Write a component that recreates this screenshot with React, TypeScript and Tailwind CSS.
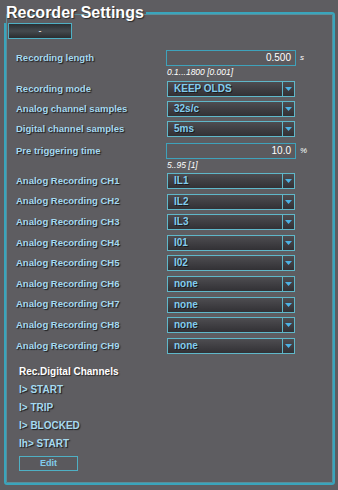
import React from 'react'

const font = { fontFamily: '"Liberation Sans", Arial, sans-serif' }

const selects: [string, string][] = [
  ['Analog Recording CH1', 'IL1'],
  ['Analog Recording CH2', 'IL2'],
  ['Analog Recording CH3', 'IL3'],
  ['Analog Recording CH4', 'I01'],
  ['Analog Recording CH5', 'I02'],
  ['Analog Recording CH6', 'none'],
  ['Analog Recording CH7', 'none'],
  ['Analog Recording CH8', 'none'],
  ['Analog Recording CH9', 'none'],
]

const digital = ['I> START', 'I> TRIP', 'I> BLOCKED', 'Ih> START']

function Label({ children }: { children: React.ReactNode }) {
  return (
    <span className="w-[161px] shrink-0 pl-[10px] text-[9.5px] font-bold text-[#a6daf0] [text-shadow:1px_1px_1px_#1c1c1e] whitespace-nowrap">
      {children}
    </span>
  )
}

function Select({ value }: { value: string }) {
  return (
    <div className="flex h-[16px] w-[128px] border border-[#5fb7c9] bg-gradient-to-b from-[#4e4d51] to-[#323135]">
      <span className="flex-1 pl-[6px] text-[10px] font-bold leading-[14px] text-[#82cdee] [text-shadow:1px_1px_0_#1c1c1e]">
        {value}
      </span>
      <div className="flex w-[12px] items-center justify-center border-l border-[#5fb7c9]">
        <svg width="7" height="4" viewBox="0 0 7 4">
          <path d="M0 0h7L3.5 4z" fill="#4cb2e4" />
        </svg>
      </div>
    </div>
  )
}

function Input({ label, value, unit }: { label: string; value: string; unit: string }) {
  return (
    <div className="flex h-[16px] items-center">
      <Label>{label}</Label>
      <div className="-ml-[1px] h-[16px] w-[130px] border border-[#3ea2bb] bg-[#5b5a5e] pr-[4px] text-right text-[10px] leading-[14px] text-white">
        {value}
      </div>
      <span className="ml-[4px] text-[8px] italic text-white">{unit}</span>
    </div>
  )
}

function Hint({ children }: { children: React.ReactNode }) {
  return (
    <div className="mt-[1px] h-[10px] pl-[161px] text-[8.5px] italic leading-[10px] text-white">{children}</div>
  )
}

function Row({ label, value, className = '' }: { label: string; value: string; className?: string }) {
  return (
    <div className={`flex h-[16px] items-center ${className}`}>
      <Label>{label}</Label>
      <Select value={value} />
    </div>
  )
}

export default function App() {
  return (
    <div className="h-[490px] w-[338px] overflow-hidden bg-[#5e5d61] pt-[3px]" style={font}>
      <fieldset className="ml-[4px] mr-[3px] rounded-[3px] border-2 border-[#3aa5bc] px-0 pb-[12px] pt-0 shadow-[inset_0_0_0_1px_#5a8e9a]">
        <legend className="-ml-[2px] px-[2px] text-[16px] font-bold leading-[20px] text-white [text-shadow:1px_1px_1px_#2a2a2a]">
          Recorder Settings
        </legend>

        <button className="ml-[2px] flex h-[16px] w-[64px] items-center justify-center border border-[#4fb0c4] bg-gradient-to-b from-[#2a2f33] via-[#454a4e] to-[#2a2d30] text-[9px] leading-none text-white">
          -
        </button>

        <div className="mt-[11px]">
          <Input label="Recording length" value="0.500" unit="s" />
        </div>
        <Hint>0.1...1800 [0.001]</Hint>

        <Row className="mt-[4px]" label="Recording mode" value="KEEP OLDS" />
        <Row className="mt-[4px]" label="Analog channel samples" value="32s/c" />
        <Row className="mt-[4px]" label="Digital channel samples" value="5ms" />

        <div className="mt-[6px]">
          <Input label="Pre triggering time" value="10.0" unit="%" />
        </div>
        <Hint>5..95 [1]</Hint>

        <div className="mt-[3px] flex flex-col gap-[4.6px]">
          {selects.map(([label, value]) => (
            <Row key={label} label={label} value={value} />
          ))}
        </div>

        <div className="mt-[12px] pl-[13px] text-[10px] font-bold leading-[12px] text-white [text-shadow:1px_1px_1px_#2a2a2a]">
          Rec.Digital Channels
        </div>
        {digital.map((d) => (
          <div
            key={d}
            className="mt-[6px] pl-[13px] text-[10px] font-bold leading-[12px] text-[#a6daf0] [text-shadow:1px_1px_1px_#1c1c1e]"
          >
            {d}
          </div>
        ))}

        <button className="ml-[13px] mt-[6px] flex h-[15px] w-[59px] items-center justify-center border border-[#4fb0c4] bg-[#5a595d] text-[9px] font-bold text-[#82cdee]">
          Edit
        </button>
      </fieldset>
    </div>
  )
}
